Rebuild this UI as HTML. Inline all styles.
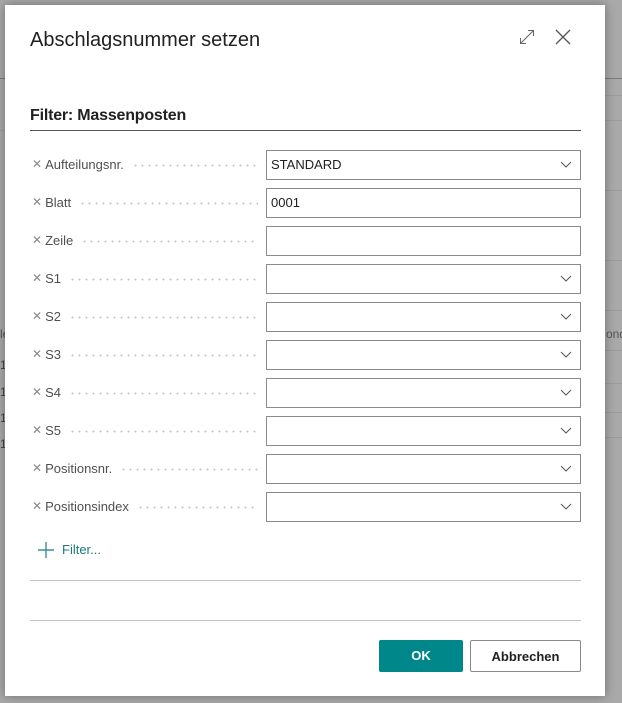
<!DOCTYPE html>
<html><head><meta charset="utf-8"><style>
*{margin:0;padding:0;box-sizing:border-box}
body{width:622px;height:703px;overflow:hidden;background:#a9a9a9;font-family:"Liberation Sans",sans-serif;position:relative}
.bgl{position:absolute;height:1px;background:#9c9c9c}
.dlg{position:absolute;left:5px;top:5px;width:600px;height:691px;background:#fff;box-shadow:0 0 10px rgba(0,0,0,.35)}
.a{position:absolute}
.title{left:25px;top:24px;font-size:20px;color:#212121;letter-spacing:0px}
.sub{left:25px;top:102px;font-size:16px;color:#212121;font-weight:bold;letter-spacing:-0.2px}
.hr{height:1px;left:25px;width:551px}
.lab{left:27px;font-size:13px;color:#505050;height:29px;line-height:29px;width:226px;display:flex}
.lab .x{color:#888;font-size:12px;margin-right:3px}
.lab .d{flex:1;height:3px;margin:14px 0 0 8px;background-image:radial-gradient(circle,#c4c4c4 0.9px,transparent 1.1px);background-size:7px 3px;background-repeat:repeat-x}
.inp{left:261px;width:315px;height:30px;border:1px solid #8a8a8a;font-size:13px;color:#212121;line-height:28px;padding-left:4px}
.chev{position:absolute;right:8px;top:10px}
.btn{top:635px;height:32px;font-size:13px;font-weight:bold;text-align:center;line-height:31px}
</style></head><body>
<div class="bgl" style="left:0;top:78px;width:5px;background:#7a7a7a"></div>
<div class="bgl" style="left:605px;top:78px;width:17px;background:#7a7a7a"></div>
<div class="bgl" style="left:605px;top:95px;width:17px"></div>
<div class="bgl" style="left:605px;top:120px;width:17px"></div>
<div class="bgl" style="left:0;top:130px;width:5px"></div>
<div class="bgl" style="left:605px;top:190px;width:17px"></div>
<div class="bgl" style="left:605px;top:260px;width:17px"></div>
<div class="bgl" style="left:605px;top:310px;width:17px"></div>
<div class="bgl" style="left:605px;top:350px;width:17px"></div>
<div class="bgl" style="left:605px;top:383px;width:17px"></div>
<div class="bgl" style="left:605px;top:412px;width:17px"></div>
<div class="bgl" style="left:605px;top:437px;width:17px"></div>
<div class="a" style="left:606px;top:327px;font-size:12px;color:#555">ond</div>
<div class="a" style="left:0;top:327px;font-size:12px;color:#555">le</div>
<div class="a" style="left:0;top:358px;font-size:12px;color:#444">1</div>
<div class="a" style="left:0;top:385px;font-size:12px;color:#444">1</div>
<div class="a" style="left:0;top:411px;font-size:12px;color:#444">1</div>
<div class="a" style="left:0;top:437px;font-size:12px;color:#444">1</div>
<div class="dlg">
<div class="a title">Abschlagsnummer setzen</div>
<svg class="a" style="left:514px;top:24px" width="16" height="16" viewBox="0 0 16 16" fill="none" stroke="#666" stroke-width="1"><path d="M1.5 14.5L14.5 1.5M9 1.5H14.5V7M1.5 9V14.5H7"/></svg>
<svg class="a" style="left:550px;top:24px" width="16" height="16" viewBox="0 0 16 16" fill="none" stroke="#555" stroke-width="1.3"><path d="M1 1L15 15M15 1L1 15"/></svg>
<div class="a sub">Filter: Massenposten</div>
<div class="a hr" style="top:125px;background:#555"></div>

<div class="a lab" style="top:145px"><span class="x">✕</span>Aufteilungsnr.<span class="d"></span></div>
<div class="a inp" style="top:145px">STANDARD<svg class="chev" width="12" height="8" viewBox="0 0 12 8"><path d="M1 1L6 6L11 1" fill="none" stroke="#555" stroke-width="1"/></svg></div>
<div class="a lab" style="top:183px"><span class="x">✕</span>Blatt<span class="d"></span></div>
<div class="a inp" style="top:183px">0001</div>
<div class="a lab" style="top:221px"><span class="x">✕</span>Zeile<span class="d"></span></div>
<div class="a inp" style="top:221px"></div>
<div class="a lab" style="top:259px"><span class="x">✕</span>S1<span class="d"></span></div>
<div class="a inp" style="top:259px"><svg class="chev" width="12" height="8" viewBox="0 0 12 8"><path d="M1 1L6 6L11 1" fill="none" stroke="#555" stroke-width="1"/></svg></div>
<div class="a lab" style="top:297px"><span class="x">✕</span>S2<span class="d"></span></div>
<div class="a inp" style="top:297px"><svg class="chev" width="12" height="8" viewBox="0 0 12 8"><path d="M1 1L6 6L11 1" fill="none" stroke="#555" stroke-width="1"/></svg></div>
<div class="a lab" style="top:335px"><span class="x">✕</span>S3<span class="d"></span></div>
<div class="a inp" style="top:335px"><svg class="chev" width="12" height="8" viewBox="0 0 12 8"><path d="M1 1L6 6L11 1" fill="none" stroke="#555" stroke-width="1"/></svg></div>
<div class="a lab" style="top:373px"><span class="x">✕</span>S4<span class="d"></span></div>
<div class="a inp" style="top:373px"><svg class="chev" width="12" height="8" viewBox="0 0 12 8"><path d="M1 1L6 6L11 1" fill="none" stroke="#555" stroke-width="1"/></svg></div>
<div class="a lab" style="top:411px"><span class="x">✕</span>S5<span class="d"></span></div>
<div class="a inp" style="top:411px"><svg class="chev" width="12" height="8" viewBox="0 0 12 8"><path d="M1 1L6 6L11 1" fill="none" stroke="#555" stroke-width="1"/></svg></div>
<div class="a lab" style="top:449px"><span class="x">✕</span>Positionsnr.<span class="d"></span></div>
<div class="a inp" style="top:449px"><svg class="chev" width="12" height="8" viewBox="0 0 12 8"><path d="M1 1L6 6L11 1" fill="none" stroke="#555" stroke-width="1"/></svg></div>
<div class="a lab" style="top:487px"><span class="x">✕</span>Positionsindex<span class="d"></span></div>
<div class="a inp" style="top:487px"><svg class="chev" width="12" height="8" viewBox="0 0 12 8"><path d="M1 1L6 6L11 1" fill="none" stroke="#555" stroke-width="1"/></svg></div>

<svg class="a" style="left:33px;top:537px" width="16" height="16" viewBox="0 0 16 16" stroke="#3a8f92" stroke-width="1.4"><path d="M8 0V16M0 8H16"/></svg>
<div class="a" style="left:57px;top:537px;font-size:13px;color:#1f7a7e">Filter...</div>
<div class="a hr" style="top:575px;background:#c4c4c4"></div>
<div class="a hr" style="top:615px;background:#c4c4c4"></div>
<div class="a btn" style="left:374px;width:84px;background:#00878a;color:#fff;border-radius:2px">OK</div>
<div class="a btn" style="left:465px;width:111px;border:1px solid #8a8a8a;color:#212121;border-radius:2px">Abbrechen</div>
</div>
</body></html>
